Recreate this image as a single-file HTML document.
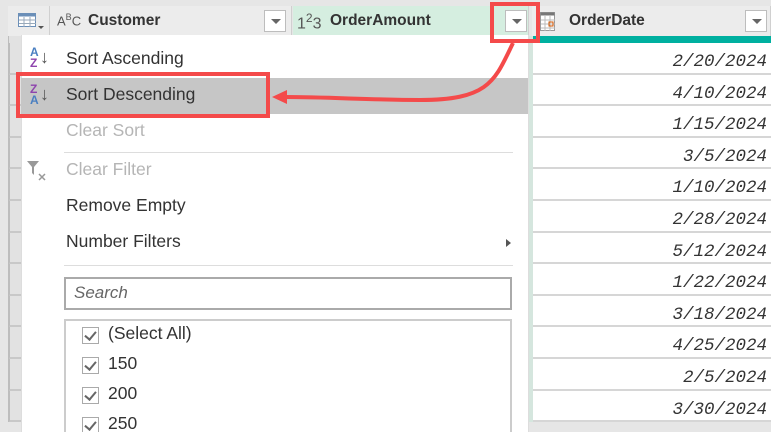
<!DOCTYPE html>
<html><head><meta charset="utf-8"><style>
*{margin:0;padding:0;box-sizing:border-box}
html,body{width:771px;height:432px;overflow:hidden}
body{background:#e6e6e6;position:relative;font-family:"Segoe UI","Liberation Sans",sans-serif;}
.a{position:absolute}
.hdr{top:6px;height:30px;background:#ececec;border-right:1px solid #d0d0d0}
.ht{font-weight:bold;font-size:15.5px;color:#333;top:12px}
.dd{width:22px;height:22px;background:#fff;border:1px solid #bdbdbd;top:10px}
.dd:after{content:"";position:absolute;left:6px;top:8px;border-left:5px solid transparent;border-right:5px solid transparent;border-top:5px solid #666}
.row{left:533px;width:238px;height:31.6px;background:#fff;border-bottom:2px solid #d6d6d6;font-family:"Liberation Mono",monospace;font-style:italic;font-size:17.5px;color:#333;text-align:right;padding-right:4px;line-height:38px}
.ls{left:9px;width:12px;height:31.6px;background:#e2e2e2;border-bottom:2px solid #c8c8c8;border-left:1px solid #bdbdbd}
.mi{left:66px;font-size:17.5px;color:#333}
.cb{left:82px;width:17px;height:17px;border:1px solid #aaa;background:#fff}
.cb:after{content:"";position:absolute;left:4px;top:1px;width:5px;height:9px;border-right:2px solid #666;border-bottom:2px solid #666;transform:rotate(40deg)}
</style></head><body>
<div class="a hdr" style="left:8px;width:42px"></div>
<svg class="a" style="left:18px;top:13px" width="26" height="18"><rect x="0.5" y="0.5" width="17" height="13" fill="#fff" stroke="#6b8fb8"/><rect x="0.5" y="0.5" width="17" height="3" fill="#6b8fb8"/><path d="M6 4v10M12 4v10M1 7h17M1 10.5h17" stroke="#9ab" /><path d="M20 13l3 3 3-3z" fill="#555"/></svg>
<div class="a hdr" style="left:50px;width:242px"></div>
<div class="a" style="left:57px;top:12px;font-size:13px;color:#555">A<sup style="font-size:9px">B</sup>C</div>
<div class="a ht" style="left:88px">Customer</div>
<div class="a dd" style="left:264px"></div>
<div class="a hdr" style="left:293px;width:236px;background:#d5eee0"></div>
<div class="a" style="left:297px;top:11px;font-size:16px;color:#555">1<sup style="font-size:12px">2</sup>3</div>
<div class="a ht" style="left:330px">OrderAmount</div>
<div class="a dd" style="left:505px"></div>
<div class="a hdr" style="left:532px;width:239px"></div>
<svg class="a" style="left:540px;top:12px" width="16" height="20"><rect x="0.5" y="0.5" width="14" height="18" fill="#fff" stroke="#999"/><rect x="0.5" y="0.5" width="14" height="3" fill="#777"/><path d="M5 4v15M10 4v15M1 8h14M1 12h14M1 16h14" stroke="#bbb"/><rect x="9" y="10" width="4" height="4" fill="none" stroke="#d35400"/></svg>
<div class="a ht" style="left:569px">OrderDate</div>
<div class="a dd" style="left:745px"></div>
<div class="a" style="left:532px;top:36px;width:239px;height:7px;background:#00b0a0"></div>
<div class="a" style="left:529px;top:36px;width:4px;height:386px;background:#d5e6de"></div>
<div class="a" style="left:8px;top:36px;width:13px;height:386px;background:#e2e2e2;border-left:1px solid #bdbdbd"></div>
<div class="a ls" style="top:43px"></div><div class="a ls" style="top:74.6px"></div><div class="a ls" style="top:106.2px"></div><div class="a ls" style="top:137.8px"></div><div class="a ls" style="top:169.4px"></div><div class="a ls" style="top:201px"></div><div class="a ls" style="top:232.6px"></div><div class="a ls" style="top:264.2px"></div><div class="a ls" style="top:295.8px"></div><div class="a ls" style="top:327.4px"></div><div class="a ls" style="top:359px"></div><div class="a ls" style="top:390.6px"></div>
<div class="a row" style="top:43px">2/20/2024</div>
<div class="a row" style="top:74.6px">4/10/2024</div>
<div class="a row" style="top:106.2px">1/15/2024</div>
<div class="a row" style="top:137.8px">3/5/2024</div>
<div class="a row" style="top:169.4px">1/10/2024</div>
<div class="a row" style="top:201px">2/28/2024</div>
<div class="a row" style="top:232.6px">5/12/2024</div>
<div class="a row" style="top:264.2px">1/22/2024</div>
<div class="a row" style="top:295.8px">3/18/2024</div>
<div class="a row" style="top:327.4px">4/25/2024</div>
<div class="a row" style="top:359px">2/5/2024</div>
<div class="a row" style="top:390.6px">3/30/2024</div>
<div class="a" style="left:21px;top:35px;width:508px;height:397px;background:#fff;border-left:1px solid #ddd;border-right:1px solid #ddd"></div>
<div class="a" style="left:21px;top:78px;width:507px;height:36px;background:#c6c6c6"></div>
<div class="a" style="left:30px;top:47px;font:bold 12px/11px 'Liberation Sans',sans-serif;color:#4a7fc1">A<br><span style="color:#8e44ad">Z</span></div>
<div class="a" style="left:40px;top:47px;font-size:18px;color:#555">↓</div>
<div class="a mi" style="top:48px">Sort Ascending</div>
<div class="a" style="left:30px;top:84px;font:bold 12px/11px 'Liberation Sans',sans-serif;color:#8e44ad">Z<br><span style="color:#4a7fc1">A</span></div>
<div class="a" style="left:40px;top:84px;font-size:18px;color:#555">↓</div>
<div class="a mi" style="top:84px">Sort Descending</div>
<div class="a mi" style="top:120px;color:#b5b5b5">Clear Sort</div>
<div class="a" style="left:64px;top:152px;width:449px;height:1px;background:#ddd"></div>
<svg class="a" style="left:26px;top:160px" width="24" height="24"><path d="M1 1h12l-5 6v8l-2-2V7z" fill="#999"/><path d="M13 14l6 6M19 14l-6 6" stroke="#999" stroke-width="1.5"/></svg>
<div class="a mi" style="top:159px;color:#b5b5b5">Clear Filter</div>
<div class="a mi" style="top:195px">Remove Empty</div>
<div class="a mi" style="top:231px">Number Filters</div>
<div class="a" style="left:506px;top:239px;border-top:4px solid transparent;border-bottom:4px solid transparent;border-left:5px solid #555"></div>
<div class="a" style="left:64px;top:265px;width:449px;height:1px;background:#ddd"></div>
<div class="a" style="left:64px;top:277px;width:448px;height:33px;border:2px solid #aaa"></div>
<div class="a" style="left:74px;top:283px;font-size:17px;font-style:italic;color:#666">Search</div>
<div class="a" style="left:64px;top:319px;width:448px;height:120px;border:2px solid #ccc"></div>
<div class="a cb" style="top:327px"></div><div class="a mi" style="left:108px;top:323px">(Select All)</div>
<div class="a cb" style="top:357px"></div><div class="a mi" style="left:108px;top:353px">150</div>
<div class="a cb" style="top:387px"></div><div class="a mi" style="left:108px;top:383px">200</div>
<div class="a cb" style="top:417px"></div><div class="a mi" style="left:108px;top:413px">250</div>
<div class="a" style="left:16px;top:72px;width:254px;height:46px;border:4px solid #f44a4a"></div>
<div class="a" style="left:490px;top:2px;width:50px;height:41px;border:4px solid #f44a4a"></div>
<svg class="a" style="left:0;top:0" width="771" height="432"><path d="M513 43 C495 80 490 100 420 100 C370 100 330 97 285 97" fill="none" stroke="#f44a4a" stroke-width="4"/><path d="M272 97l15-7v14z" fill="#f44a4a"/></svg>
</body></html>
